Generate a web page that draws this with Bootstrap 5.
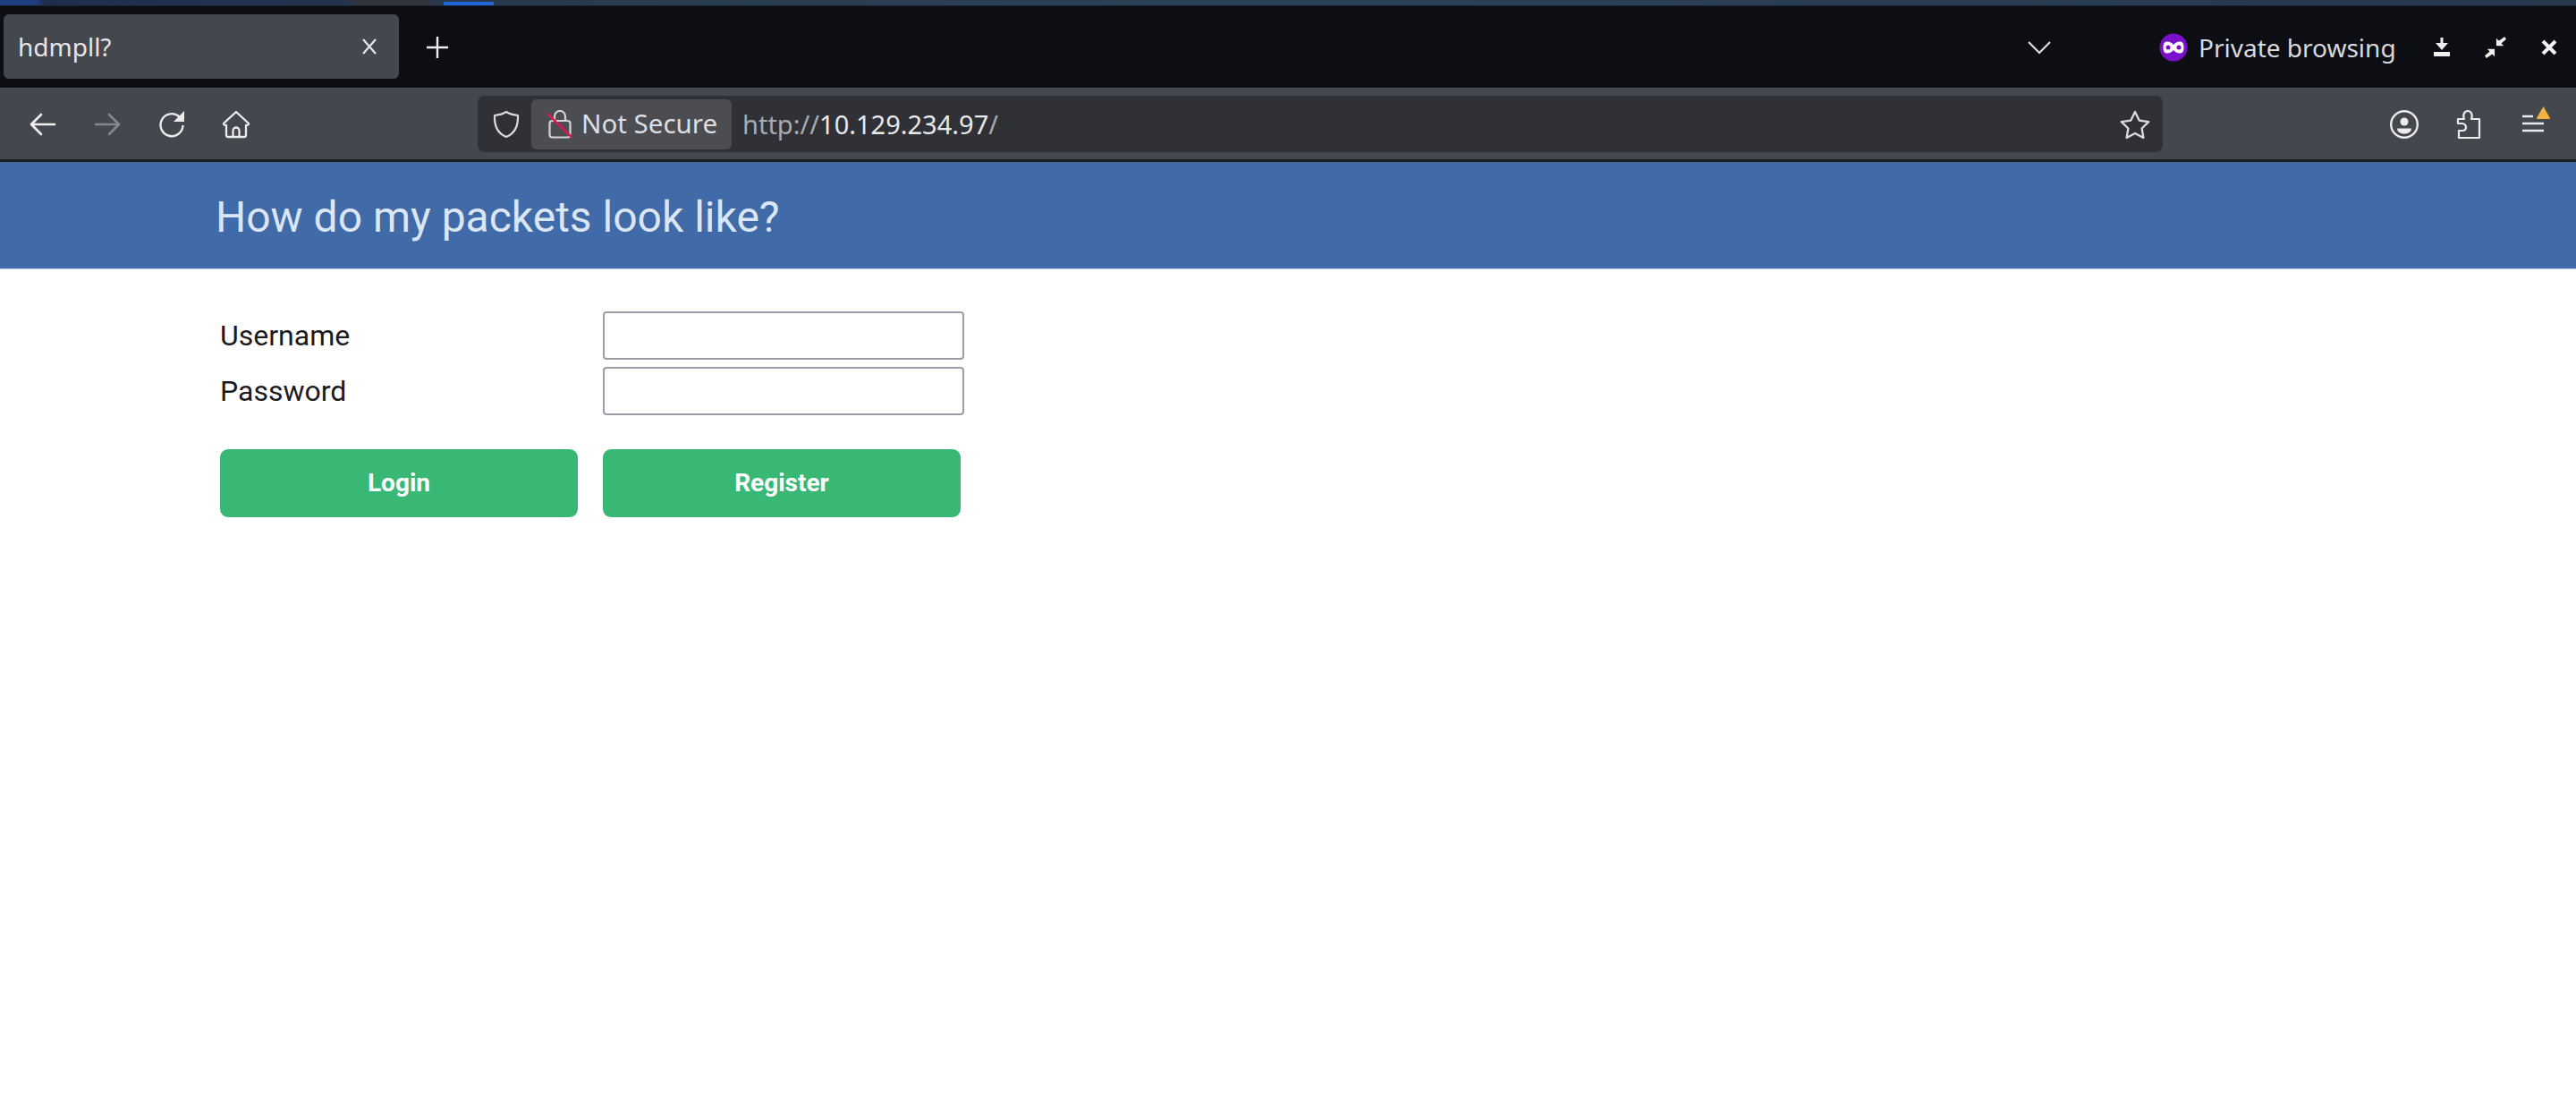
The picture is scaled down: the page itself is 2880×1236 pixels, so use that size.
<!DOCTYPE html>
<html lang="en">
<head>
<meta charset="utf-8">
<title>hdmpll?</title>
<link href="https://cdn.jsdelivr.net/npm/bootstrap@5.3.0/dist/css/bootstrap.min.css" rel="stylesheet">
<style>
html,body{height:100%;background:#fff}
body{font-family:Roboto,sans-serif;overflow:hidden}
.desk-strip{height:7px;padding-top:2px;background:linear-gradient(90deg,#1f3f82 0,#1f3f82 40px,#1f2e4b 50px,#24344f 393px,#33343d 393px,#33343d 482px,#28394f 482px,#2a4257 1400px,#27384f 2880px);box-shadow:inset 0 -1px 0 #161c28}
.desk-mark{width:56px;height:4px;margin-left:496px;background:#1f66d8}
.tab-row{height:91px;background:#0c0e13;color:#e6e6e8;font-family:"Noto Sans",sans-serif}
.tab-item{width:442px;height:72px;margin:9px 0 0 4px;background:#45474e;border-radius:6px;padding:0 24px 0 16px;font-size:28px}
.slot-plus{width:86px}
.slot-chev{width:72px;margin-right:98px}
.slot-win{width:60px}
.priv-text{min-width:242px;margin-left:12px;font-size:28px;color:#d9d9dc;white-space:nowrap}
.tool-row{height:80px;background:#45474e;border-top:1px solid #50525a;padding:0 12px;color:#e8e8ea;font-family:"Noto Sans",sans-serif}
.slot-tool{width:72px}
.slot-gap{margin-left:234px}
.url-box{width:1884px;height:63px;background:#2f3136;border-radius:8px;padding:4px 14px 4px 4px}
.url-shield{width:56px}
.sec-chip{width:224px;height:56px;background:#4b4d52;border-radius:6px;padding-left:18px;font-size:29.5px;white-space:nowrap;color:#dfdfe2}
.sec-chip svg{margin-right:10px}
.url-text{margin-left:12px;font-size:29px;color:#a9aaad;white-space:nowrap}
.url-text b{font-weight:400;color:#e9e9eb}
.tool-edge{height:3px;background:#1b1c20}
.page-banner{height:120px;background:#406aa8;border-bottom:1px solid #c5d0e2;padding:5px 0 0 241px;color:#dbe6f5;font-size:48px;font-weight:400}
.page-form{padding:43px 0 0 246px;color:#1b1b1f}
.form-line{height:62px;font-size:32px}
.form-label-box{width:428px}
.form-field{width:404px;height:54px;border:2px solid #9c9ca6;border-radius:4px;background:#fff;padding:0 8px}
.form-actions{margin-top:34px;gap:28px}
.act-btn{width:400px;height:76px;background:#38b775;border:0;border-radius:9px;color:#fff;font-size:28px;font-weight:700;padding:0}
.act-btn:hover{background:#38b775;color:#fff}
</style>
</head>
<body>
<div class="desk-strip"><div class="desk-mark"></div></div>
<div class="tab-row d-flex align-items-start">
  <div class="tab-item d-flex align-items-center justify-content-between">
    <span>hdmpll?</span>
    <svg width="18" height="20" viewBox="0 0 18 20" fill="none" stroke="#e6e6e8" stroke-width="2.2"><path d="M2 2l14 16M16 2L2 18"/></svg>
  </div>
  <div class="slot-plus align-self-stretch d-flex align-items-center justify-content-center">
    <svg width="26" height="26" viewBox="0 0 26 26" stroke="#eee" stroke-width="2.4"><path d="M13 1v24M1 13h24"/></svg>
  </div>
  <div class="ms-auto align-self-stretch d-flex align-items-center">
    <div class="slot-chev d-flex justify-content-center">
      <svg width="26" height="16" viewBox="0 0 26 16" fill="none" stroke="#dedee0" stroke-width="2.2"><path d="M1 2l12 12L25 2"/></svg>
    </div>
    <svg width="32" height="32" viewBox="0 0 32 32"><circle cx="16" cy="16" r="15.5" fill="#7a10c9"/><path d="M16 13c-2-2-4-3.500-7-3.500-3 0-4.500 2-4.500 6.500s1.500 6.500 4.500 6.500c3 0 5-1.500 7-3.500 2 2 4 3.500 7 3.500 3 0 4.500-2 4.500-6.500s-1.500-6.500-4.500-6.500c-3 0-5 1.500-7 3.500z" fill="#fff"/><circle cx="10" cy="16" r="2.500" fill="#7a10c9"/><circle cx="22" cy="16" r="2.500" fill="#7a10c9"/></svg>
    <span class="priv-text">Private browsing</span>
    <div class="slot-win d-flex justify-content-center">
      <svg width="18" height="21" viewBox="0 0 18 21" fill="#efefef"><path d="M7.500 0h3v6H16l-7 8-7-8h5.500zM0 16h18v5H0z"/></svg>
    </div>
    <div class="slot-win d-flex justify-content-center">
      <svg width="24" height="24" viewBox="0 0 26 26" fill="#efefef"><path d="M24 0l2 3-6 5 3 3h-9V2l3 3zM2 26l-2-3 6-5-3-3h9v9l-3-3z"/></svg>
    </div>
    <div class="slot-win d-flex justify-content-center">
      <svg width="18" height="18" viewBox="0 0 18 18" fill="none" stroke="#f2f2f2" stroke-width="4"><path d="M2 2l14 14M16 2L2 16"/></svg>
    </div>
  </div>
</div>
<div class="tool-row d-flex align-items-center">
  <div class="slot-tool d-flex justify-content-center">
    <svg width="30" height="26" viewBox="0 0 30 26" fill="none" stroke="#f0f0f0" stroke-width="2.600" stroke-linecap="round" stroke-linejoin="round"><path d="M28 13H3M13 2L2 13l11 11"/></svg>
  </div>
  <div class="slot-tool d-flex justify-content-center">
    <svg width="30" height="26" viewBox="0 0 30 26" fill="none" stroke="#85878c" stroke-width="2.600" stroke-linecap="round" stroke-linejoin="round"><path d="M2 13h25M17 2l11 11-11 11"/></svg>
  </div>
  <div class="slot-tool d-flex justify-content-center">
    <svg width="30" height="30" viewBox="0 0 30 30" fill="none" stroke="#ececec" stroke-width="2.400"><path d="M23.500 6.500A12.500 12.500 0 1 0 27.500 16"/><path d="M29 0v12H17z" fill="#ececec" stroke="none"/></svg>
  </div>
  <div class="slot-tool d-flex justify-content-center">
    <svg width="32" height="32" viewBox="0 0 32 32" fill="none" stroke="#ececec" stroke-width="2.300" stroke-linecap="round" stroke-linejoin="round"><path d="M2 15L16 2l14 13c0 1.500-1 2-3 2v11a2 2 0 0 1-2 2H7a2 2 0 0 1-2-2V17c-2 0-3-.5-3-2zM12.500 30v-7a3.500 3.500 0 0 1 7 0v7"/></svg>
  </div>
  <div class="url-box slot-gap d-flex align-items-center">
    <div class="url-shield d-flex justify-content-center">
      <svg width="30" height="32" viewBox="0 0 30 32" fill="none" stroke="#dcdcde" stroke-width="2.200" stroke-linejoin="round"><path d="M15 2c4 2.500 8 3.500 13 4 .5 12-3 20-13 24C5 26 1.500 18 2 6c5-.5 9-1.500 13-4z"/></svg>
    </div>
    <div class="sec-chip d-flex align-items-center">
      <svg width="28" height="32" viewBox="0 0 28 32" fill="none"><path d="M8 12V7a6 6 0 0 1 12 0v5" stroke="#d4d4d6" stroke-width="2.200"/><rect x="2.500" y="12" width="23" height="18.500" rx="3" stroke="#d4d4d6" stroke-width="2.200"/><path d="M0 4l28 27" stroke="#d81b52" stroke-width="2.600"/></svg>
      <span>Not Secure</span>
    </div>
    <span class="url-text">http://<b>10.129.234.97</b>/</span>
    <svg class="ms-auto" width="34" height="32" viewBox="0 0 34 32" fill="none" stroke="#dcdcde" stroke-width="2.300" stroke-linejoin="round"><path d="M17 2l4.700 9.600 10.500 1.500-7.600 7.400 1.800 10.500L17 26l-9.400 5 1.800-10.500L1.800 13.100l10.500-1.500z"/></svg>
  </div>
  <div class="ms-auto d-flex align-items-center">
    <div class="slot-tool d-flex justify-content-center">
      <svg width="32" height="32" viewBox="0 0 32 32" fill="none" stroke="#ececec" stroke-width="2.400"><circle cx="16" cy="16" r="14.800"/><circle cx="16" cy="13" r="4.500" fill="#ececec" stroke="none"/><path d="M8 20.500h16c0 3.500-3 6-8 6s-8-2.500-8-6z" fill="#ececec" stroke="none"/></svg>
    </div>
    <div class="slot-tool d-flex justify-content-center">
      <svg width="28" height="34" viewBox="0 0 28 34" fill="none" stroke="#ececec" stroke-width="2.200" stroke-linejoin="round"><path d="M2 11h7c-2-4 0-9 4-9s6 5 4 9h9v21H3v-8h4c3 0 4-2 4-4s-2-4-4-4H2z"/></svg>
    </div>
    <div class="slot-tool d-flex justify-content-center">
      <svg width="40" height="40" viewBox="0 0 40 40" fill="none"><path d="M8 11h12M8 19h24M8 27h24" stroke="#ececec" stroke-width="2.400"/><path d="M31.500 0l7.500 13a1 1 0 0 1-1 1H25a1 1 0 0 1-1-1z" fill="#f5b13d"/></svg>
    </div>
  </div>
</div>
<div class="tool-edge"></div>
<div class="page-banner d-flex align-items-center">How do my packets look like?</div>
<form class="page-form">
  <div class="form-line d-flex align-items-center">
    <label class="form-label-box" for="u">Username</label>
    <input class="form-field" id="u" type="text">
  </div>
  <div class="form-line d-flex align-items-center">
    <label class="form-label-box" for="p">Password</label>
    <input class="form-field" id="p" type="password">
  </div>
  <div class="form-actions d-flex">
    <button type="button" class="btn act-btn">Login</button>
    <button type="button" class="btn act-btn">Register</button>
  </div>
</form>
<script src="https://cdn.jsdelivr.net/npm/bootstrap@5.3.0/dist/js/bootstrap.bundle.min.js"></script>
</body>
</html>
